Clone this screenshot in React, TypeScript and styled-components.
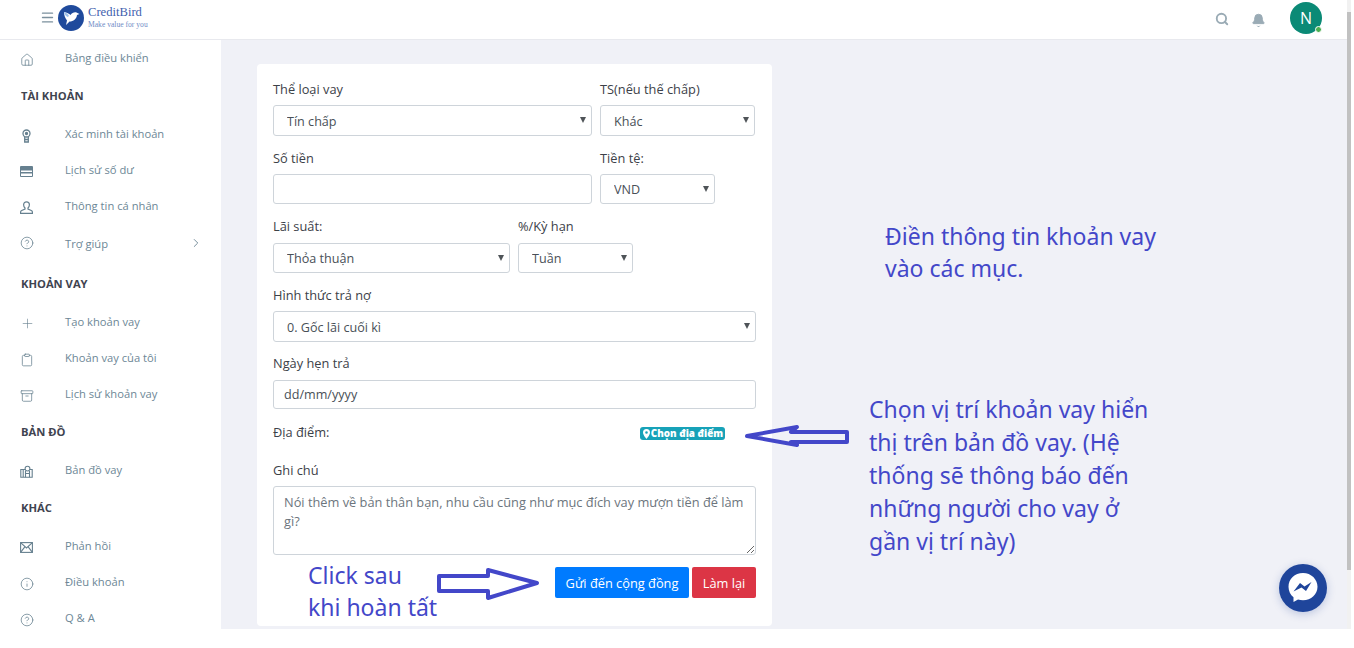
import React from "react";
import styled, { createGlobalStyle } from "styled-components";
import { Home, HelpCircle, ChevronRight, Plus, Clipboard, Archive, Info, Search, Bell, Menu } from "lucide-react";

const Global = createGlobalStyle`
  html, body { margin: 0; padding: 0; background: #fff; overflow: hidden; }
  * { box-sizing: border-box; }
  body { font-family: "Open Sans", "Noto Sans", sans-serif; }
`;

const Page = styled.div`
  position: relative;
  width: 1351px;
  height: 629px;
  display: flex;
  overflow: hidden;
`;
const Viewport = styled.div`
  flex: 1;
  min-width: 0;
  display: flex;
  flex-direction: column;
`;
const ScrollTrack = styled.div`
  width: 4px;
  background: #f1f1f1;
  padding-top: 12px;
`;
const ScrollThumb = styled.div`
  width: 100%;
  height: 558px;
  background: #c1c1c1;
`;
const Header = styled.header`
  height: 40px;
  flex: none;
  background: #fff;
  border-bottom: 1px solid #e8e9ee;
  display: flex;
  align-items: center;
  padding: 0 25px 4px 40px;
`;
const MenuButton = styled.span`
  display: flex;
  color: #7b909d;
  margin-right: 3px;
`;
const LogoMark = styled.svg`
  width: 26px;
  height: 26px;
  margin-right: 4px;
`;
const LogoText = styled.div`
  display: flex;
  flex-direction: column;
  font-family: "Liberation Serif", serif;
`;
const LogoName = styled.span`
  font-size: 12.6px;
  line-height: 14px;
  color: #3f5fae;
`;
const LogoTag = styled.span`
  font-size: 7.6px;
  line-height: 10px;
  margin-top: 1px;
  color: #6f8cc6;
`;
const HeaderRight = styled.div`
  margin-left: auto;
  display: flex;
  align-items: center;
  color: #9aabb5;
`;
const HeaderIcon = styled.span<{ $drop: number; $gap: number }>`
  display: flex;
  padding-top: ${(p) => p.$drop}px;
  margin-right: ${(p) => p.$gap}px;
`;
const Avatar = styled.div`
  position: relative;
  width: 32px;
  height: 32px;
  border-radius: 50%;
  background: #0b8a76;
  color: #fff;
  font-size: 16px;
  display: flex;
  align-items: center;
  justify-content: center;
`;
const StatusDot = styled.span`
  position: absolute;
  right: 0;
  bottom: 1px;
  width: 7px;
  height: 7px;
  border-radius: 50%;
  background: #4caf50;
  border: 1px solid #fff;
`;
const Body = styled.div`
  flex: 1;
  min-height: 0;
  display: flex;
`;
const Sidebar = styled.nav`
  width: 221px;
  flex: none;
  background: #fff;
  overflow: hidden;
`;
const NavHeading = styled.div`
  height: 40px;
  display: flex;
  align-items: center;
  padding: 0 0 2px 21px;
  font-size: 11.2px;
  font-weight: 700;
  color: #3f4450;
`;
const NavItem = styled.div<{ $tall?: boolean }>`
  height: ${(p) => (p.$tall ? 40 : 36)}px;
  display: flex;
  align-items: center;
  padding: 0 18px 2px 20px;
  font-size: 11.2px;
  color: #6d8796;
`;
const NavIcon = styled.span<{ $tall?: boolean }>`
  width: 45px;
  flex: none;
  display: flex;
  align-items: center;
  padding-top: ${(p) => (p.$tall ? 0 : 5)}px;
  color: #66808f;
`;
const NavArrow = styled.span`
  margin-left: auto;
  display: flex;
  color: #66808f;
`;
const Main = styled.main`
  flex: 1;
  min-width: 0;
  background: #f0f1f7;
  padding: 24px 0 0 36px;
  overflow: hidden;
`;
const Card = styled.form`
  width: 515px;
  height: 562px;
  background: #fff;
  border-radius: 4px;
  padding: 16px;
  color: #3c4148;
  font-size: 12.8px;
`;
const FormRow = styled.div<{ $pitch: number }>`
  display: flex;
  gap: 8px;
  height: ${(p) => p.$pitch}px;
`;
const Field = styled.div<{ $w: number }>`
  width: ${(p) => p.$w}px;
  flex: none;
`;
const Label = styled.label<{ $nudge?: boolean }>`
  display: block;
  height: 18px;
  line-height: 16px;
  padding-top: ${(p) => (p.$nudge ? 1 : 0)}px;
  margin-bottom: 7px;
`;
const SelectWrap = styled.div`
  position: relative;
  &::after {
    content: "";
    position: absolute;
    right: 6px;
    top: 12px;
    border-left: 3px solid transparent;
    border-right: 3px solid transparent;
    border-top: 6px solid #4f5458;
  }
`;
const Select = styled.select<{ $h?: number }>`
  appearance: none;
  display: block;
  width: 100%;
  height: ${(p) => p.$h ?? 31}px;
  border: 1px solid #ced4da;
  border-radius: 3px;
  background: #fff;
  padding: ${(p) => (p.$h ? 0 : 2)}px 0 0 13px;
  font: 12.6px "Open Sans", sans-serif;
  color: #495057;
`;
const Input = styled.input<{ $h?: number }>`
  display: block;
  width: 100%;
  height: ${(p) => p.$h ?? 30}px;
  border: 1px solid #ced4da;
  border-radius: 3px;
  padding: 0 10px;
  font: 12.6px "Open Sans", sans-serif;
  color: #495057;
  &::placeholder { color: #495057; }
`;
const PlaceRow = styled.div`
  display: flex;
  justify-content: space-between;
  align-items: center;
  height: 18px;
  margin-bottom: 20px;
  padding-right: 31px;
`;
const Badge = styled.span`
  display: inline-flex;
  align-items: center;
  gap: 1px;
  height: 13px;
  margin-top: 3px;
  padding: 0 2px 0 3px;
  border-radius: 3px;
  background: #17a2b8;
  color: #fff;
  font-size: 9.8px;
  font-weight: 800;
`;
const TextArea = styled.textarea`
  display: block;
  width: 483px;
  height: 69px;
  border: 1px solid #ced4da;
  border-radius: 3px;
  padding: 6px 10px;
  font: 12.8px/19px "Open Sans", sans-serif;
  color: #495057;
  &::placeholder { color: #6c757d; }
`;
const Actions = styled.div`
  display: flex;
  justify-content: flex-end;
  gap: 3px;
  margin-top: 12px;
`;
const Button = styled.button<{ $bg: string; $w: number }>`
  width: ${(p) => p.$w}px;
  height: 31px;
  border: none;
  border-radius: 2px;
  background: ${(p) => p.$bg};
  color: #fff;
  font: 12.8px "Open Sans", sans-serif;
  padding: 0;
`;
const Note = styled.div<{ $x: number; $y: number; $w: number; $lh: number }>`
  position: absolute;
  left: ${(p) => p.$x}px;
  top: ${(p) => p.$y}px;
  width: ${(p) => p.$w}px;
  font-family: "Noto Sans", sans-serif;
  font-size: 23px;
  line-height: ${(p) => p.$lh}px;
  color: #4347c9;
`;
const Overlay = styled.svg`
  position: absolute;
  left: 0;
  top: 0;
  width: 1351px;
  height: 629px;
  pointer-events: none;
`;
const Chat = styled.div`
  position: absolute;
  left: 1279px;
  top: 564px;
  width: 48px;
  height: 48px;
  border-radius: 50%;
  background: #1f459b;
  box-shadow: 0 2px 8px rgba(31, 69, 155, 0.25);
  display: flex;
  align-items: center;
  justify-content: center;
`;

const ico = { size: 14, strokeWidth: 1.3 };

const KeyBadge = () => (
  <svg width="13" height="14" viewBox="0 0 13 14" fill="none" stroke="currentColor" strokeWidth="1.3">
    <circle cx="6.5" cy="4.500" r="3.500" />
    <circle cx="6.5" cy="4.500" r="1" fill="currentColor" />
    <path d="M4.700 8v5h3.600V8M4.700 10.500h3.600" />
  </svg>
);
const CardIcon = () => (
  <svg width="13" height="11" viewBox="0 0 13 11">
    <path fillRule="evenodd" fill="currentColor" d="M1 0h11a1 1 0 0 1 1 1v9a1 1 0 0 1-1 1H1a1 1 0 0 1-1-1V1a1 1 0 0 1 1-1zM1 4.500V6h11V4.500zM1 7.500V10h11V7.500z" />
  </svg>
);
const PersonIcon = () => (
  <svg width="13" height="13" viewBox="0 0 13 13" fill="none" stroke="currentColor" strokeWidth="1.2">
    <path d="M6.500.8c1.800 0 2.900 1.300 2.900 3 0 1.300-.6 2.500-1.400 3.100v1.200l3.300 1.400c.7.300 1.100.9 1.100 1.600v1.300H.6v-1.300c0-.7.400-1.300 1.100-1.600L5 8.100V6.900C4.200 6.300 3.600 5.100 3.600 3.800c0-1.700 1.100-3 2.900-3z" />
  </svg>
);
const MapIcon = () => (
  <svg width="13" height="13" viewBox="0 0 13 13" fill="none" stroke="currentColor" strokeWidth="1.1">
    <path d="M5 4.500H.8v7.700h11.400V4.500H10M3.200 4.500v7.700" />
    <circle cx="7.500" cy="3.600" r="2.400" />
    <path d="M5.500 6v6.200M9.500 6v6.200M5.500 8.500h4" />
  </svg>
);
const MailIcon = () => (
  <svg width="13" height="11" viewBox="0 0 13 11" fill="none" stroke="currentColor" strokeWidth="1.1">
    <rect x=".6" y=".6" width="11.800" height="9.800" />
    <path d="M.6.600 6.500 6 12.400.6M.6 10.400 5 4.600M12.400 10.400 8 4.600" />
  </svg>
);
const PinIcon = () => (
  <svg width="7" height="10" viewBox="0 0 7 10">
    <path fillRule="evenodd" fill="#fff" d="M3.500 0A3.500 3.500 0 0 0 0 3.500C0 6 3.500 10 3.500 10S7 6 7 3.500A3.500 3.500 0 0 0 3.500 0zm0 2.200a1.300 1.300 0 1 1 0 2.600 1.300 1.300 0 0 1 0-2.600z" />
  </svg>
);

type Entry = { h?: string; t?: string; i?: React.ReactNode; tall?: boolean; arrow?: boolean };
const nav: Entry[] = [
  { t: "Bảng điều khiển", i: <Home {...ico} /> },
  { h: "TÀI KHOẢN" },
  { t: "Xác minh tài khoản", i: <KeyBadge /> },
  { t: "Lịch sử số dư", i: <CardIcon /> },
  { t: "Thông tin cá nhân", i: <PersonIcon /> },
  { t: "Trợ giúp", i: <HelpCircle {...ico} />, tall: true, arrow: true },
  { h: "KHOẢN VAY" },
  { t: "Tạo khoản vay", i: <Plus size={15} strokeWidth={1} /> },
  { t: "Khoản vay của tôi", i: <Clipboard {...ico} /> },
  { t: "Lịch sử khoản vay", i: <Archive {...ico} /> },
  { h: "BẢN ĐỒ" },
  { t: "Bản đồ vay", i: <MapIcon /> },
  { h: "KHÁC" },
  { t: "Phản hồi", i: <MailIcon /> },
  { t: "Điều khoản", i: <Info {...ico} /> },
  { t: "Q & A", i: <HelpCircle {...ico} /> },
];

export default function App() {
  return (
    <>
      <Global />
      <Page>
        <Viewport>
          <Header>
            <MenuButton><Menu size={15} strokeWidth={2.2} /></MenuButton>
            <LogoMark viewBox="0 0 26 26">
              <circle cx="13" cy="13" r="13" fill="#1f4a9c" />
              <path d="M6 7c3 .5 5 1.500 6.500 3 1.500-2 3.500-3 6-2.500l3 1.500-2.500 1c-.5 4-3.500 6.500-7.500 6.500L8 20l1-4.500C7 13 6 10 6 7z" fill="#fff" />
              <path d="M6 7c2 .5 4 2 5 4l-1.500 1C7.500 11 6.500 9 6 7z" fill="#9cc0ea" />
            </LogoMark>
            <LogoText>
              <LogoName>CreditBird</LogoName>
              <LogoTag>Make value for you</LogoTag>
            </LogoText>
            <HeaderRight>
              <HeaderIcon $drop={3} $gap={22}><Search size={14} strokeWidth={3.2} /></HeaderIcon>
              <HeaderIcon $drop={6} $gap={24}><Bell size={15} fill="currentColor" strokeWidth={1.5} /></HeaderIcon>
              <Avatar>N<StatusDot /></Avatar>
            </HeaderRight>
          </Header>
          <Body>
            <Sidebar>
              {nav.map((e, k) =>
                e.h ? (
                  <NavHeading key={k}>{e.h}</NavHeading>
                ) : (
                  <NavItem key={k} $tall={e.tall}>
                    <NavIcon $tall={e.tall}>{e.i}</NavIcon>
                    {e.t}
                    {e.arrow && <NavArrow><ChevronRight size={14} strokeWidth={1.5} /></NavArrow>}
                  </NavItem>
                )
              )}
            </Sidebar>
            <Main>
              <Card onSubmit={(ev) => ev.preventDefault()}>
                <FormRow $pitch={69}>
                  <Field $w={319}>
                    <Label $nudge>Thể loại vay</Label>
                    <SelectWrap><Select defaultValue="a"><option value="a">Tín chấp</option></Select></SelectWrap>
                  </Field>
                  <Field $w={155}>
                    <Label $nudge>TS(nếu thế chấp)</Label>
                    <SelectWrap><Select defaultValue="a"><option value="a">Khác</option></Select></SelectWrap>
                  </Field>
                </FormRow>
                <FormRow $pitch={69}>
                  <Field $w={319}>
                    <Label $nudge>Số tiền</Label>
                    <Input $h={30} />
                  </Field>
                  <Field $w={115}>
                    <Label $nudge>Tiền tệ:</Label>
                    <SelectWrap><Select $h={30} defaultValue="a"><option value="a">VND</option></Select></SelectWrap>
                  </Field>
                </FormRow>
                <FormRow $pitch={68}>
                  <Field $w={237}>
                    <Label>Lãi suất:</Label>
                    <SelectWrap><Select $h={30} defaultValue="a"><option value="a">Thỏa thuận</option></Select></SelectWrap>
                  </Field>
                  <Field $w={115}>
                    <Label>%/Kỳ hạn</Label>
                    <SelectWrap><Select $h={30} defaultValue="a"><option value="a">Tuần</option></Select></SelectWrap>
                  </Field>
                </FormRow>
                <FormRow $pitch={69}>
                  <Field $w={483}>
                    <Label $nudge>Hình thức trả nợ</Label>
                    <SelectWrap><Select defaultValue="a"><option value="a">0. Gốc lãi cuối kì</option></Select></SelectWrap>
                  </Field>
                </FormRow>
                <FormRow $pitch={68}>
                  <Field $w={483}>
                    <Label>Ngày hẹn trả</Label>
                    <Input $h={29} placeholder="dd/mm/yyyy" />
                  </Field>
                </FormRow>
                <PlaceRow>
                  <span>Địa điểm:</span>
                  <Badge><PinIcon />Chọn địa điểm</Badge>
                </PlaceRow>
                <Label $nudge>Ghi chú</Label>
                <TextArea placeholder="Nói thêm về bản thân bạn, nhu cầu cũng như mục đích vay mượn tiền để làm gì?" />
                <Actions>
                  <Button type="button" $bg="#007bff" $w={134}>Gửi đến cộng đồng</Button>
                  <Button type="button" $bg="#dc3545" $w={64}>Làm lại</Button>
                </Actions>
              </Card>
            </Main>
          </Body>
        </Viewport>
        <ScrollTrack><ScrollThumb /></ScrollTrack>

        <Note $x={885} $y={220} $w={290} $lh={32}>Điền thông tin khoản vay vào các mục.</Note>
        <Note $x={869} $y={393} $w={290} $lh={33}>Chọn vị trí khoản vay hiển thị trên bản đồ vay. (Hệ thống sẽ thông báo đến những người cho vay ở gần vị trí này)</Note>
        <Note $x={308} $y={559} $w={140} $lh={32}>Click sau<br />khi hoàn tất</Note>
        <Overlay viewBox="0 0 1351 629">
          <path d="M747 436 797 427 791 432H847V442H791L797 445Z" fill="none" stroke="#4347c9" strokeWidth="4" strokeLinejoin="round" />
          <path d="M439 576H488V570L537 583 488 598V591H439Z" fill="none" stroke="#4347c9" strokeWidth="4" strokeLinejoin="round" />
        </Overlay>
        <Chat>
          <svg width="34" height="34" viewBox="0 0 34 34">
            <path d="M17 2C8.700 2 2.500 8 2.500 15.800c0 4.300 1.900 8 5 10.500V31l4.500-2.500c1.600.5 3.300.8 5 .8 8.300 0 14.500-6 14.500-13.500S25.300 2 17 2z" fill="#fff" />
            <path d="M7.500 20.500 14 12l4.500 3.500L25.500 11 20 20l-4.500-3.500z" fill="#1f459b" />
          </svg>
        </Chat>
      </Page>
    </>
  );
}
